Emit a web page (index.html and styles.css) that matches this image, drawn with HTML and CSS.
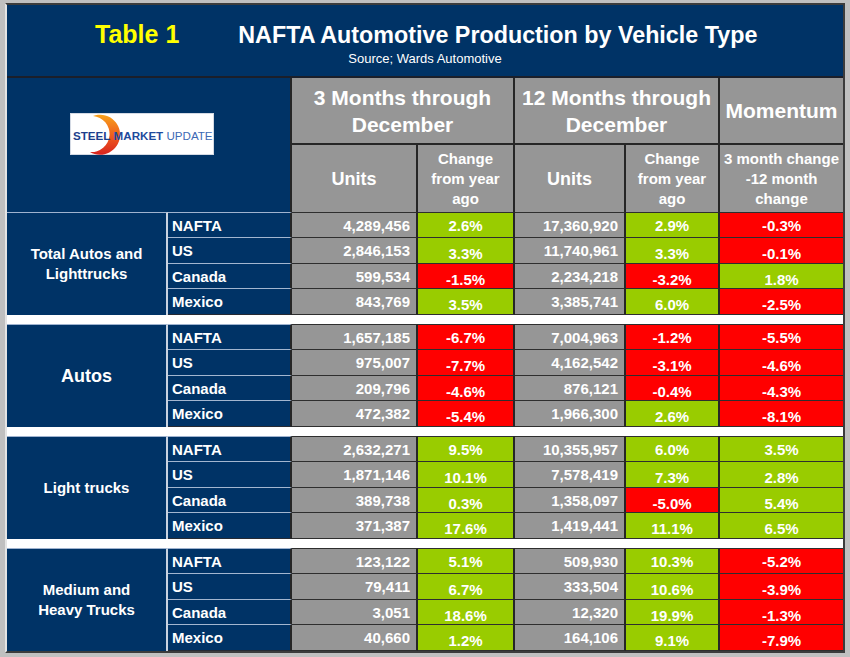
FILE: index.html
```html
<!DOCTYPE html>
<html lang="en">
<head>
<meta charset="utf-8">
<title>NAFTA Automotive Production by Vehicle Type</title>
<link rel="stylesheet" href="styles.css">
</head>
<body>
<div class="frame">
  <div class="title">
    <div class="title-line">
      <span class="tnum">Table 1</span>
      <span class="tmain">NAFTA Automotive Production by Vehicle Type</span>
    </div>
    <div class="source">Source; Wards Automotive</div>
  </div>

  <div class="head">
    <div class="logo-cell">
      <div class="logo">
        <svg class="arc" width="144" height="42" viewBox="0 0 144 42">
          <defs>
            <linearGradient id="lg" x1="0" y1="0" x2="0" y2="1">
              <stop offset="0" stop-color="#f7a21b"/>
              <stop offset="0.55" stop-color="#ee5a1e"/>
              <stop offset="1" stop-color="#d8231f"/>
            </linearGradient>
          </defs>
          <path d="M23 3 A20 20 0 1 1 20 39 A18 18 0 1 0 23 3 Z" fill="url(#lg)"/>
        </svg>
        <span class="lt"><b class="l1">STEEL</b> <b class="l2">MARKET</b> <span class="l3">UPDATE</span></span>
      </div>
    </div>
    <div class="hd big c34">3 Months through<br>December</div>
    <div class="hd big c56">12 Months through<br>December</div>
    <div class="hd big last">Momentum</div>
    <div class="hd sub units">Units</div>
    <div class="hd sub">Change<br>from year<br>ago</div>
    <div class="hd sub units">Units</div>
    <div class="hd sub">Change<br>from year<br>ago</div>
    <div class="hd sub last">3 month change<br>-12 month<br>change</div>
  </div>

  <div class="grp">
    <div class="lab">Total Autos and<br>Lighttrucks</div>
    <div class="row"><div class="reg">NAFTA</div><div class="u">4,289,456</div><div class="p g">2.6%</div><div class="u">17,360,920</div><div class="p g">2.9%</div><div class="p r m">-0.3%</div></div>
    <div class="row"><div class="reg">US</div><div class="u">2,846,153</div><div class="p g">3.3%</div><div class="u">11,740,961</div><div class="p g">3.3%</div><div class="p r m">-0.1%</div></div>
    <div class="row"><div class="reg">Canada</div><div class="u">599,534</div><div class="p r">-1.5%</div><div class="u">2,234,218</div><div class="p r">-3.2%</div><div class="p g m">1.8%</div></div>
    <div class="row"><div class="reg">Mexico</div><div class="u">843,769</div><div class="p g">3.5%</div><div class="u">3,385,741</div><div class="p g">6.0%</div><div class="p r m">-2.5%</div></div>
  </div>
  <div class="gap"></div>

  <div class="grp">
    <div class="lab lab-big">Autos</div>
    <div class="row"><div class="reg">NAFTA</div><div class="u">1,657,185</div><div class="p r">-6.7%</div><div class="u">7,004,963</div><div class="p r">-1.2%</div><div class="p r m">-5.5%</div></div>
    <div class="row"><div class="reg">US</div><div class="u">975,007</div><div class="p r">-7.7%</div><div class="u">4,162,542</div><div class="p r">-3.1%</div><div class="p r m">-4.6%</div></div>
    <div class="row"><div class="reg">Canada</div><div class="u">209,796</div><div class="p r">-4.6%</div><div class="u">876,121</div><div class="p r">-0.4%</div><div class="p r m">-4.3%</div></div>
    <div class="row"><div class="reg">Mexico</div><div class="u">472,382</div><div class="p r">-5.4%</div><div class="u">1,966,300</div><div class="p g">2.6%</div><div class="p r m">-8.1%</div></div>
  </div>
  <div class="gap"></div>

  <div class="grp">
    <div class="lab">Light trucks</div>
    <div class="row"><div class="reg">NAFTA</div><div class="u">2,632,271</div><div class="p g">9.5%</div><div class="u">10,355,957</div><div class="p g">6.0%</div><div class="p g m">3.5%</div></div>
    <div class="row"><div class="reg">US</div><div class="u">1,871,146</div><div class="p g">10.1%</div><div class="u">7,578,419</div><div class="p g">7.3%</div><div class="p g m">2.8%</div></div>
    <div class="row"><div class="reg">Canada</div><div class="u">389,738</div><div class="p g">0.3%</div><div class="u">1,358,097</div><div class="p r">-5.0%</div><div class="p g m">5.4%</div></div>
    <div class="row"><div class="reg">Mexico</div><div class="u">371,387</div><div class="p g">17.6%</div><div class="u">1,419,441</div><div class="p g">11.1%</div><div class="p g m">6.5%</div></div>
  </div>
  <div class="gap"></div>

  <div class="grp">
    <div class="lab">Medium and<br>Heavy Trucks</div>
    <div class="row"><div class="reg">NAFTA</div><div class="u">123,122</div><div class="p g">5.1%</div><div class="u">509,930</div><div class="p g">10.3%</div><div class="p r m">-5.2%</div></div>
    <div class="row"><div class="reg">US</div><div class="u">79,411</div><div class="p g">6.7%</div><div class="u">333,504</div><div class="p g">10.6%</div><div class="p r m">-3.9%</div></div>
    <div class="row"><div class="reg">Canada</div><div class="u">3,051</div><div class="p g">18.6%</div><div class="u">12,320</div><div class="p g">19.9%</div><div class="p r m">-1.3%</div></div>
    <div class="row"><div class="reg">Mexico</div><div class="u">40,660</div><div class="p g">1.2%</div><div class="u">164,106</div><div class="p g">9.1%</div><div class="p r m">-7.9%</div></div>
  </div>
</div>
</body>
</html>
```

FILE: styles.css
```css
* {
  box-sizing: border-box;
  margin: 0;
  padding: 0;
}

body {
  background: #c0c0c0;
  font-family: "Liberation Sans", Arial, sans-serif;
  color: #ffffff;
  font-weight: bold;
}

.frame {
  margin: 3px 0 0 5px;
  width: 840px;
  border-top: 2px solid #3c3c3c;
  border-left: 2px solid #e4e4e4;
  border-right: 2px solid #3c3c3c;
  border-bottom: 2px solid #3c3c3c;
  background: #ffffff;
}

/* ---------- title ---------- */
.title {
  height: 73px;
  background: #003366;
  border-bottom: 2px solid #1b1f2a;
  padding-top: 14px;
}

.title-line {
  display: flex;
  align-items: baseline;
  gap: 59px;
  padding-left: 88px;
  line-height: 30px;
}

.tnum {
  color: #ffff00;
  font-size: 25px;
}

.tmain {
  font-size: 23.3px;
}

.source {
  text-align: center;
  font-size: 13px;
  font-weight: normal;
  line-height: 16px;
  margin-top: 1px;
}

/* ---------- header ---------- */
.head {
  display: grid;
  grid-template-columns: 161px 124px 126px 97px 111px 94px 123px;
  grid-template-rows: 67px 67px;
}

.logo-cell {
  grid-column: 1 / 3;
  grid-row: 1 / 3;
  background: #003366;
  border-right: 2px solid #262626;
  padding: 35px 0 0 63px;
}

.logo {
  position: relative;
  width: 144px;
  height: 42px;
  background: #ffffff;
  border: 1px solid #d4dae4;
  display: flex;
  align-items: center;
  padding: 2px 0 0 2px;
}

.arc {
  position: absolute;
  left: -1px;
  top: -1px;
}

.lt {
  position: relative;
  font-size: 11.6px;
  white-space: nowrap;
}

.l1 {
  color: #1d3f8c;
}

.l2 {
  color: #1e4a9c;
}

.l3 {
  color: #3d69b4;
  font-weight: normal;
}

.hd {
  background: #969696;
  border-right: 2px solid #262626;
  display: flex;
  align-items: center;
  justify-content: center;
  text-align: center;
}

.hd.last {
  border-right: none;
}

.big {
  font-size: 21px;
  line-height: 27px;
  border-bottom: 2px solid #262626;
}

.c34 {
  grid-column: 3 / 5;
}

.c56 {
  grid-column: 5 / 7;
}

.sub {
  font-size: 15px;
  line-height: 20px;
}

.sub.units {
  font-size: 18px;
}

/* ---------- data groups ---------- */
.grp {
  display: grid;
  grid-template-columns: 161px 124px 126px 97px 111px 94px 123px;
  grid-template-rows: 26px 26px 25px 26px;
}

.gap {
  height: 9px;
  background: #ffffff;
}

.row {
  display: contents;
}

.lab {
  grid-column: 1;
  grid-row: 1 / span 4;
  background: #003366;
  border-top: 1px solid #9fb3cf;
  border-right: 2px solid #c9d3e1;
  display: flex;
  align-items: center;
  justify-content: center;
  text-align: center;
  font-size: 15px;
  line-height: 20px;
  padding-bottom: 1px;
}

.lab-big {
  font-size: 18px;
}

.reg,
.u,
.p {
  display: flex;
  align-items: center;
  font-size: 15px;
  border-bottom: 1px solid #2e2e2e;
  border-right: 2px solid #262626;
}

.reg {
  background: #003366;
  padding-left: 4px;
  border-bottom-color: #a3b6d0;
}

.row:last-child .reg {
  border-bottom-color: #262a33;
}

.lab + .row > .reg {
  border-top: 1px solid #9fb3cf;
}

.lab + .row > .u,
.lab + .row > .p {
  border-top: 1px solid #2e2e2e;
}

.u {
  background: #969696;
  justify-content: flex-end;
  padding-right: 6px;
}

.p {
  justify-content: center;
}

.row + .row .p {
  padding-top: 6px;
}

.g {
  background: #99cc00;
}

.r {
  background: #ff0000;
}

.m {
  border-right: none;
}
```
